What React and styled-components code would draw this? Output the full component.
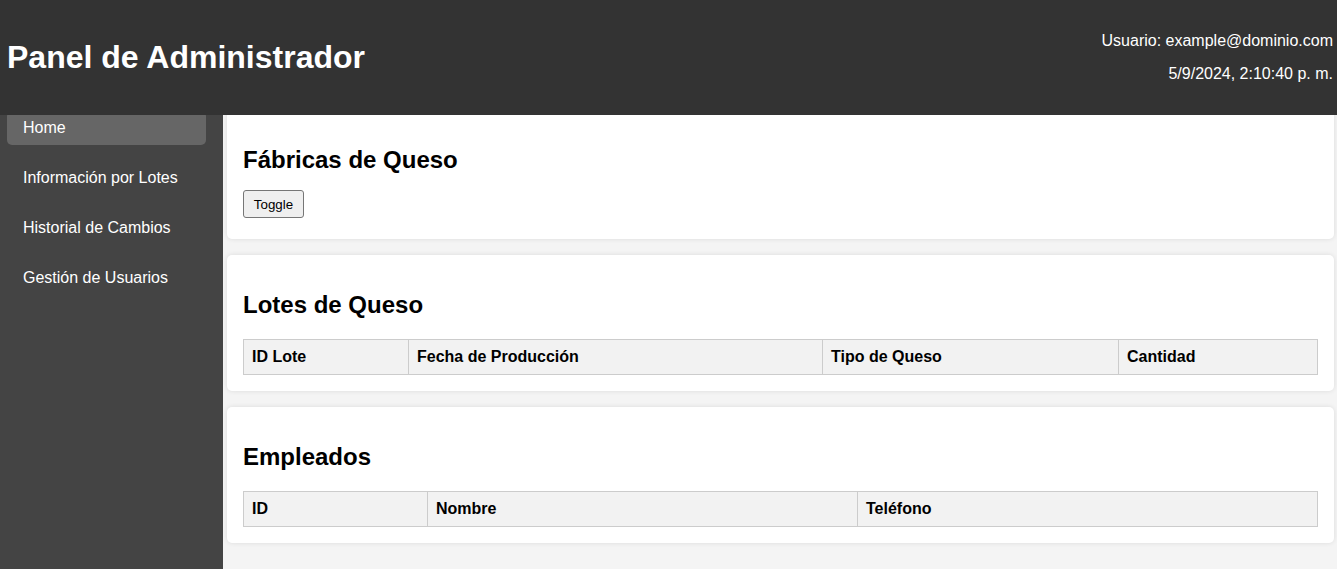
import React from "react";
import styled, { createGlobalStyle } from "styled-components";

const Global = createGlobalStyle`
  html, body { margin: 0; padding: 0; }
  body {
    font-family: "Liberation Sans", Arial, sans-serif;
    background: #f4f4f4;
    color: #000;
  }
  * { box-sizing: border-box; }
`;

const Header = styled.header`
  position: fixed;
  top: 0;
  left: 0;
  right: 0;
  height: 115px;
  background: #333;
  color: #fff;
  display: flex;
  align-items: center;
  justify-content: space-between;
  padding: 0 4px 0 7px;
  z-index: 10;
`;

const Title = styled.h1`
  margin: 0;
  font-size: 32px;
  font-weight: bold;
  line-height: 37px;
`;

const UserInfo = styled.div`
  display: flex;
  flex-direction: column;
  align-items: flex-end;
  gap: 15px;
  font-size: 16px;
  line-height: 18px;
`;

const Layout = styled.div`
  display: flex;
  min-height: 569px;
`;

const Sidebar = styled.nav`
  width: 223px;
  flex-shrink: 0;
  background: #444;
  padding: 111px 17px 0 7px;
  display: flex;
  flex-direction: column;
  gap: 16px;
`;

const NavItem = styled.a`
  display: block;
  padding: 8px 16px;
  line-height: 18px;
  font-size: 16px;
  color: #fff;
  text-decoration: none;
  border-radius: 5px;
  background: ${(p) => (p.$active ? "#666" : "transparent")};
`;

const Main = styled.main`
  flex: 1;
  padding: 110px 4px 20px 4px;
  display: flex;
  flex-direction: column;
  gap: 16px;
`;

const Card = styled.section`
  background: #fff;
  border-radius: 5px;
  box-shadow: 0 0 5px rgba(0, 0, 0, 0.1);
  padding: 16px;
`;

const CardTitle = styled.h2`
  margin: 20px 0 ${(p) => p.$mb || 20}px;
  font-size: 24px;
  line-height: 28px;
  font-weight: bold;
`;

const ToggleRow = styled.div`
  height: 33px;
`;

const ToggleButton = styled.button`
  font-family: "Liberation Sans", Arial, sans-serif;
  font-size: 13.33px;
  height: 28px;
  width: 61px;
  padding: 0;
  background: #efefef;
  border: 1px solid #767676;
  border-radius: 3px;
  color: #000;
`;

const Table = styled.table`
  width: 100%;
  border-collapse: collapse;
  table-layout: fixed;
`;

const Th = styled.th`
  border: 1px solid #ccc;
  background: #f2f2f2;
  padding: 8px;
  text-align: left;
  font-size: 16px;
  line-height: 18px;
  font-weight: bold;
`;

export default function App() {
  return (
    <>
      <Global />
      <Header>
        <Title>Panel de Administrador</Title>
        <UserInfo>
          <span>Usuario: example@dominio.com</span>
          <span>5/9/2024, 2:10:40 p. m.</span>
        </UserInfo>
      </Header>
      <Layout>
        <Sidebar>
          <NavItem $active href="#">Home</NavItem>
          <NavItem href="#">Información por Lotes</NavItem>
          <NavItem href="#">Historial de Cambios</NavItem>
          <NavItem href="#">Gestión de Usuarios</NavItem>
        </Sidebar>
        <Main>
          <Card>
            <CardTitle $mb={16}>Fábricas de Queso</CardTitle>
            <ToggleRow>
              <ToggleButton>Toggle</ToggleButton>
            </ToggleRow>
          </Card>
          <Card>
            <CardTitle>Lotes de Queso</CardTitle>
            <Table>
              <colgroup>
                <col style={{ width: 165 }} />
                <col style={{ width: 414 }} />
                <col style={{ width: 296 }} />
                <col style={{ width: 199 }} />
              </colgroup>
              <thead>
                <tr>
                  <Th>ID Lote</Th>
                  <Th>Fecha de Producción</Th>
                  <Th>Tipo de Queso</Th>
                  <Th>Cantidad</Th>
                </tr>
              </thead>
            </Table>
          </Card>
          <Card>
            <CardTitle>Empleados</CardTitle>
            <Table>
              <colgroup>
                <col style={{ width: 184 }} />
                <col style={{ width: 430 }} />
                <col style={{ width: 460 }} />
              </colgroup>
              <thead>
                <tr>
                  <Th>ID</Th>
                  <Th>Nombre</Th>
                  <Th>Teléfono</Th>
                </tr>
              </thead>
            </Table>
          </Card>
        </Main>
      </Layout>
    </>
  );
}
